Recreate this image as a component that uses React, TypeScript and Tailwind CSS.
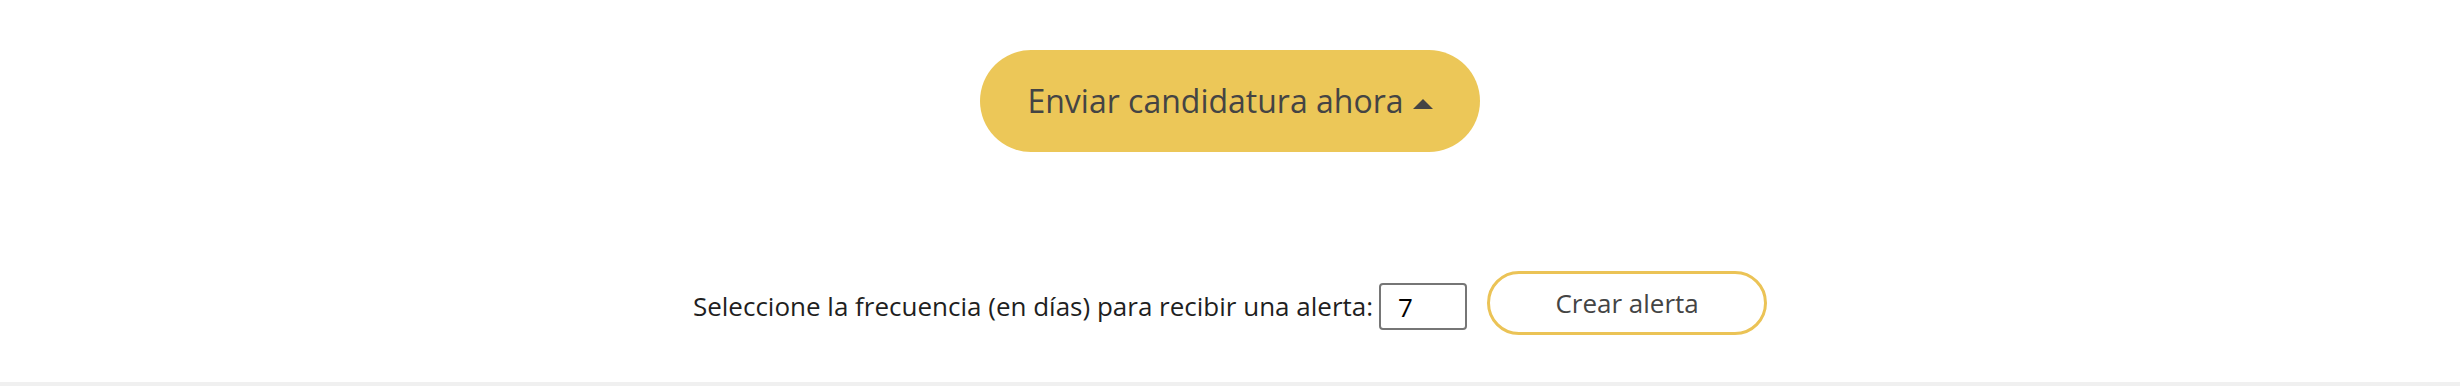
import { useState } from "react";

const Caret = () => (
  <svg width="20" height="10" viewBox="0 0 20 10" className="mt-[6px] shrink-0">
    <path d="M10 0 L20 10 L0 10 Z" fill="#444444" />
  </svg>
);

const App = () => {
  const [days, setDays] = useState("7");

  return (
    <div className="flex h-[386px] w-full flex-col bg-white font-['Open_Sans',sans-serif]">
      <div className="flex justify-center pt-[50px]">
        <button className="flex h-[102px] w-[500px] items-center justify-center gap-[9px] rounded-full bg-[#ecc758] text-[32px] text-[#444444]">
          <span>Enviar candidatura ahora</span>
          <Caret />
        </button>
      </div>

      <div className="mt-[119px] flex items-center justify-center">
        <label htmlFor="alert-days" className="mt-[6px] text-[26px] text-[#1f1f1f]">
          Seleccione la frecuencia (en días) para recibir una alerta:
        </label>
        <input
          id="alert-days"
          value={days}
          onChange={(e) => setDays(e.target.value)}
          className="ml-[6px] mt-[7px] h-[47px] w-[88px] rounded-[4px] border-2 border-[#767676] px-[17px] text-[26px] text-black outline-none"
        />
        <button className="ml-[20px] h-[64px] w-[280px] rounded-full border-[3px] border-[#ebc356] bg-white text-[26px] text-[#444444]">
          Crear alerta
        </button>
      </div>

      <div className="mt-auto h-[4px] bg-[#f0f0f0]" />
    </div>
  );
};

export default App;
